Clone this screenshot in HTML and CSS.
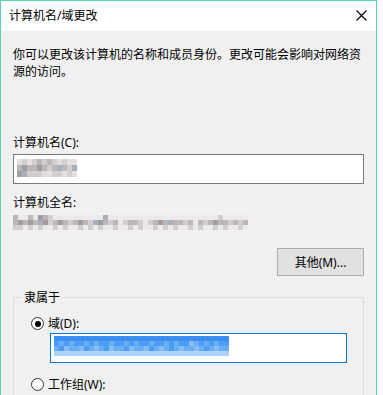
FILE: index.html
```html
<!DOCTYPE html>
<html lang="zh-CN">
<head>
  <meta charset="UTF-8" />
  <title>计算机名/域更改</title>
  <link rel="stylesheet" href="styles.css">
</head>
<body>
  <div class="window">
    <div class="titlebar">
      <span class="title">计算机名/域更改</span>
      <svg class="close" width="11" height="11" viewBox="0 0 11 11">
        <path d="M0.5 0.5 L10.5 10.5 M10.5 0.5 L0.5 10.5" stroke="#000" stroke-width="1.1" fill="none"/>
      </svg>
    </div>

    <div class="content">
      <p class="desc">你可以更改该计算机的名称和成员身份。更改可能会影响对网络资源的访问。</p>

      <label class="field-label">计算机名(C):</label>
      <div class="textbox">
        <div class="mosaic name-mosaic">
          <div class="row"><i class="w"></i><i class="l"></i><i class="w"></i><i class="l"></i><i class="m"></i><i class="l"></i><i class="m"></i><i class="l"></i><i class="w"></i><i class="l"></i><i class="w"></i><i class="w"></i></div>
          <div class="row"><i class="m"></i><i class="d"></i><i class="m"></i><i class="m"></i><i class="d"></i><i class="m"></i><i class="l"></i><i class="m"></i><i class="b"></i><i class="m"></i><i class="l"></i><i class="b"></i></div>
          <div class="row"><i class="d"></i><i class="b"></i><i class="l"></i><i class="l"></i><i class="l"></i><i class="w"></i><i class="w"></i><i class="l"></i><i class="l"></i><i class="w"></i><i class="l"></i><i class="w"></i></div>
        </div>
      </div>

      <label class="field-label full-label">计算机全名:</label>
      <div class="mosaic full-mosaic">
        <div class="row"><i class="m"></i><i class="w"></i><i class="w"></i><i class="m"></i><i class="w"></i><i class="d"></i><i class="m"></i><i class="l"></i><i class="w"></i><i class="w"></i><i class="w"></i><i class="w"></i><i class="w"></i><i class="w"></i><i class="w"></i><i class="w"></i><i class="w"></i><i class="w"></i><i class="b"></i><i class="w"></i><i class="w"></i><i class="w"></i><i class="w"></i><i class="w"></i><i class="w"></i><i class="w"></i><i class="w"></i><i class="w"></i><i class="w"></i><i class="w"></i><i class="w"></i><i class="w"></i><i class="w"></i><i class="w"></i><i class="w"></i><i class="w"></i><i class="w"></i><i class="w"></i><i class="w"></i><i class="w"></i><i class="w"></i><i class="l"></i><i class="w"></i><i class="w"></i><i class="w"></i><i class="w"></i><i class="w"></i></div>
        <div class="row"><i class="m"></i><i class="d"></i><i class="m"></i><i class="d"></i><i class="m"></i><i class="b"></i><i class="d"></i><i class="l"></i><i class="m"></i><i class="d"></i><i class="m"></i><i class="l"></i><i class="m"></i><i class="d"></i><i class="m"></i><i class="l"></i><i class="b"></i><i class="d"></i><i class="m"></i><i class="l"></i><i class="m"></i><i class="w"></i><i class="l"></i><i class="m"></i><i class="m"></i><i class="l"></i><i class="w"></i><i class="l"></i><i class="m"></i><i class="d"></i><i class="m"></i><i class="b"></i><i class="m"></i><i class="m"></i><i class="l"></i><i class="m"></i><i class="w"></i><i class="m"></i><i class="l"></i><i class="m"></i><i class="d"></i><i class="m"></i><i class="m"></i><i class="l"></i><i class="m"></i><i class="l"></i><i class="m"></i></div>
        <div class="row"><i class="l"></i><i class="l"></i><i class="w"></i><i class="l"></i><i class="w"></i><i class="l"></i><i class="w"></i><i class="w"></i><i class="l"></i><i class="w"></i><i class="l"></i><i class="w"></i><i class="w"></i><i class="l"></i><i class="w"></i><i class="l"></i><i class="w"></i><i class="l"></i><i class="w"></i><i class="w"></i><i class="l"></i><i class="w"></i><i class="w"></i><i class="l"></i><i class="w"></i><i class="l"></i><i class="w"></i><i class="w"></i><i class="l"></i><i class="w"></i><i class="l"></i><i class="w"></i><i class="l"></i><i class="w"></i><i class="w"></i><i class="l"></i><i class="w"></i><i class="l"></i><i class="w"></i><i class="w"></i><i class="l"></i><i class="w"></i><i class="l"></i><i class="w"></i><i class="w"></i><i class="l"></i><i class="w"></i></div>
      </div>

      <div class="button-row">
        <button class="btn">其他(M)...</button>
      </div>

      <fieldset class="group">
        <legend>隶属于</legend>

        <div class="radio-line">
          <span class="radio checked"></span>
          <span class="radio-label">域(D):</span>
        </div>
        <div class="textbox domain-box">
          <div class="mosaic sel-mosaic">
            <div class="row"><i class="s1"></i><i class="s1"></i><i class="s1"></i><i class="s1"></i><i class="s1"></i><i class="s1"></i><i class="s1"></i><i class="s1"></i><i class="s1"></i><i class="s1"></i><i class="s1"></i><i class="s1"></i><i class="s1"></i><i class="s1"></i><i class="s1"></i><i class="s1"></i><i class="s1"></i><i class="s1"></i><i class="s1"></i><i class="s1"></i><i class="s1"></i><i class="s1"></i><i class="s1"></i><i class="s1"></i><i class="s1"></i><i class="s1"></i><i class="s1"></i><i class="s1"></i><i class="s1"></i><i class="s1"></i><i class="s1"></i><i class="s1"></i><i class="s1"></i><i class="s1"></i><i class="s1"></i></div>
            <div class="row"><i class="s2"></i><i class="s3"></i><i class="s2"></i><i class="s3"></i><i class="s2"></i><i class="s2"></i><i class="s3"></i><i class="s2"></i><i class="s3"></i><i class="s2"></i><i class="s2"></i><i class="s3"></i><i class="s2"></i><i class="s2"></i><i class="s3"></i><i class="s2"></i><i class="s3"></i><i class="s2"></i><i class="s2"></i><i class="s3"></i><i class="s2"></i><i class="s2"></i><i class="s3"></i><i class="s2"></i><i class="s3"></i><i class="s2"></i><i class="s2"></i><i class="s4"></i><i class="s3"></i><i class="s2"></i><i class="s3"></i><i class="s2"></i><i class="s3"></i><i class="s2"></i><i class="s2"></i></div>
            <div class="row"><i class="s3"></i><i class="s2"></i><i class="s4"></i><i class="s3"></i><i class="s3"></i><i class="s4"></i><i class="s2"></i><i class="s3"></i><i class="s4"></i><i class="s3"></i><i class="s2"></i><i class="s4"></i><i class="s3"></i><i class="s3"></i><i class="s2"></i><i class="s4"></i><i class="s3"></i><i class="s3"></i><i class="s4"></i><i class="s2"></i><i class="s3"></i><i class="s4"></i><i class="s3"></i><i class="s2"></i><i class="s3"></i><i class="s4"></i><i class="s3"></i><i class="s3"></i><i class="s4"></i><i class="s3"></i><i class="s2"></i><i class="s3"></i><i class="s4"></i><i class="s3"></i><i class="s3"></i></div>
            <div class="row"><i class="s5"></i><i class="s5"></i><i class="s5"></i><i class="s5"></i><i class="s5"></i><i class="s5"></i><i class="s5"></i><i class="s5"></i><i class="s5"></i><i class="s5"></i><i class="s5"></i><i class="s5"></i><i class="s5"></i><i class="s5"></i><i class="s5"></i><i class="s5"></i><i class="s5"></i><i class="s5"></i><i class="s5"></i><i class="s5"></i><i class="s5"></i><i class="s5"></i><i class="s5"></i><i class="s5"></i><i class="s5"></i><i class="s5"></i><i class="s5"></i><i class="s5"></i><i class="s5"></i><i class="s5"></i><i class="s5"></i><i class="s5"></i><i class="s5"></i><i class="s5"></i><i class="s5"></i></div>
          </div>
        </div>

        <div class="radio-line second">
          <span class="radio"></span>
          <span class="radio-label">工作组(W):</span>
        </div>
      </fieldset>
    </div>
  </div>
</body>
</html>
```

FILE: styles.css
```css
html, body {
  margin: 0;
  padding: 0;
  background: #ffffff;
  overflow: hidden;
}
body {
  font-family: "Noto Sans", "Noto Sans CJK SC", sans-serif;
  font-size: 12px;
  line-height: 17px;
  color: #000;
}
.window {
  width: 375px;
  height: 394px;
  border-top: 1px solid #5dd3ad;
  border-left: 1px solid #5dd3ad;
  border-right: 1px solid #5dd3ad;
  display: flex;
  flex-direction: column;
}
.titlebar {
  height: 30px;
  background: #ffffff;
  display: flex;
  align-items: center;
  justify-content: space-between;
  padding: 0 9px 0 8px;
  flex-shrink: 0;
}
.title {
  margin-top: -2px;
}
.close {
  display: block;
  margin-top: -1px;
}
.content {
  flex: 1;
  background: #f0f0f0;
  padding: 0 12px;
  overflow: hidden;
}
.desc {
  margin: 15px 0 0;
  width: 350px;
}
.field-label {
  display: block;
  margin-top: 54px;
}
.full-label {
  margin-top: 10px;
}
.textbox {
  height: 30px;
  border: 1px solid #7a7a7a;
  background: #ffffff;
  margin-top: 3px;
  padding: 4px 0 0 3px;
  box-sizing: border-box;
}
.mosaic .row {
  display: flex;
  height: 5px;
}
.mosaic i {
  display: block;
  width: 5px;
  height: 5px;
}
.name-mosaic .row,
.name-mosaic i {
  height: 6px;
}
.mosaic .w { background: #e2dfdf; }
.mosaic .l { background: #d2cecd; }
.mosaic .m { background: #bbb6b7; }
.mosaic .d { background: #a39c9e; }
.mosaic .b { background: #a7b0bc; }
.full-mosaic {
  margin-top: 4px;
}
.full-mosaic .w { background: #ebe9e9; }
.sel-mosaic .s1 { background: #3b8ff3; }
.sel-mosaic .s2 { background: #4d9cf5; }
.sel-mosaic .s3 { background: #6aaef6; }
.sel-mosaic .s4 { background: #86bdf6; }
.sel-mosaic .s5 { background: #aed3f9; }
.button-row {
  display: flex;
  justify-content: flex-end;
  margin-top: 18px;
}
.btn {
  width: 87px;
  height: 28px;
  background: #e1e1e1;
  border: 1px solid #adadad;
  font-family: inherit;
  font-size: 12px;
  color: #000;
  padding: 0;
}
.group {
  margin: 13px 0 0;
  border: 1px solid #dcdcdc;
  padding: 0 16px 20px 17px;
  min-width: 0;
}
.group legend {
  padding: 0 2px;
  margin-left: -9px;
}
.radio-line {
  display: flex;
  align-items: center;
  gap: 4px;
  margin-top: 9px;
  height: 17px;
}
.radio-line.second {
  margin-top: 13px;
}
.radio {
  width: 11px;
  height: 11px;
  border: 1px solid #333333;
  border-radius: 50%;
  background: #ffffff;
  display: flex;
  align-items: center;
  justify-content: center;
  flex-shrink: 0;
}
.radio.checked::after {
  content: "";
  width: 6px;
  height: 6px;
  border-radius: 50%;
  background: #000;
}
.domain-box {
  margin: 1px 0 0 19px;
  border-color: #0078d7;
  padding: 2px 0 0 3px;
}
```
